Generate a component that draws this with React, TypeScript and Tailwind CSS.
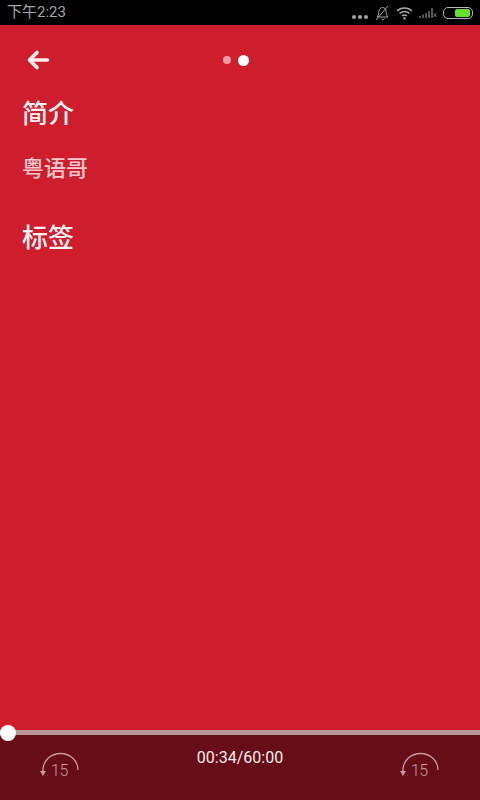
const cjk = "font-['Roboto','Noto_Sans_CJK_SC',sans-serif]";

function Replay() {
  return (
    <div className="relative h-[30px] w-[40px]">
      <svg width="40" height="30" viewBox="0 0 40 30" fill="none" className="text-[#c79a9f]">
        <path d="M3 18 A17.5 16.5 0 0 1 38 18" stroke="currentColor" strokeWidth="1.3" />
        <path d="M3 18 V20" stroke="currentColor" strokeWidth="1.6" />
        <path d="M0 19 H6 L3 24 Z" fill="currentColor" />
      </svg>
      <span className="absolute left-[11px] top-[9px] text-[16px] leading-[20px] font-light tracking-[-0.5px] text-[#c79a9f] font-['Roboto',sans-serif]">15</span>
    </div>
  );
}

function StatusBar() {
  return (
    <div className="flex h-[25px] items-center justify-between bg-black pl-[7px] pr-[7px]">
      <span className={`text-[15px] text-[#a5a5a5] ${cjk}`}>下午2:23</span>
      <div className="flex items-center gap-[6px] text-[#a5a5a5]">
        <div className="mt-[8px] flex gap-[2px]">
          <div className="h-[4px] w-[4px] rounded-full bg-[#a5a5a5]" />
          <div className="h-[4px] w-[4px] rounded-full bg-[#a5a5a5]" />
          <div className="h-[4px] w-[4px] rounded-full bg-[#a5a5a5]" />
        </div>
        <svg width="16" height="16" viewBox="0 0 16 16" fill="none" stroke="currentColor" strokeWidth="1">
          <path d="M3 12 C5 10 4.5 8 5 6 C5.5 3.5 7 2.5 8.5 2.5 C10.5 2.5 12 4 12 6 C12 8 12.5 10 14 12 Z" />
          <path d="M7 13.5 C8 15 9.5 15 10.5 13.5" />
          <path d="M14 1 L2 15" />
        </svg>
        <svg width="17" height="14" viewBox="0 0 17 14" fill="none" stroke="currentColor" strokeWidth="1.5">
          <path d="M1 5 C5 1 12 1 16 5" />
          <path d="M3.5 7.5 C6.5 5 10.5 5 13.5 7.5" />
          <path d="M6 10 C7.5 8.8 9.5 8.8 11 10" />
          <circle cx="8.5" cy="12.2" r="1.2" fill="currentColor" stroke="none" />
        </svg>
        <svg width="18" height="14" viewBox="0 0 18 14" fill="#555">
          <rect x="0" y="10" width="2" height="2" />
          <rect x="3" y="8.5" width="2" height="3.5" />
          <rect x="6" y="7" width="2" height="5" />
          <rect x="9" y="5" width="2" height="7" />
          <rect x="12" y="2" width="2" height="10" />
          <path d="M14.5 7.5 L17.5 11 M17.5 7.5 L14.5 11" stroke="#777" strokeWidth="1" />
        </svg>
        <div className="flex h-[12px] w-[30px] items-center justify-end rounded-[5px] border border-[#b5b5b5] pr-[2px]">
          <div className="h-[8px] w-[15px] rounded-[2px] bg-[#66e02e]" />
        </div>
      </div>
    </div>
  );
}

export default function App() {
  return (
    <div className="flex h-[800px] w-[480px] flex-col overflow-hidden bg-[#ce1d2d]">
      <StatusBar />
      <div className="relative flex h-[70px] shrink-0 items-center justify-center pr-[8px]">
        <svg className="absolute left-[26px] top-[24px]" width="24" height="22" viewBox="0 0 24 22" fill="none" stroke="#fbeef0" strokeWidth="3.6" strokeLinecap="round" strokeLinejoin="round">
          <path d="M21.5 11 H4" />
          <path d="M11 3.5 L3.5 11 L11 18.5" />
        </svg>
        <div className="flex items-center gap-[7px]">
          <div className="h-[8px] w-[8px] rounded-full bg-[#f29aa2]" />
          <div className="h-[11px] w-[11px] rounded-full bg-white" />
        </div>
      </div>
      <div className={`flex flex-1 flex-col pl-[22px] ${cjk}`}>
        <h2 className="mt-[1px] text-[26px] font-medium leading-[36px] text-[#fdf2f3]">简介</h2>
        <p className="mt-[22px] text-[22px] font-medium leading-[30px] text-[#f6c9cd]">粤语哥</p>
        <h2 className="mt-[36px] text-[26px] font-medium leading-[36px] text-[#fdf2f3]">标签</h2>
      </div>
      <div className="relative h-[70px] shrink-0 bg-[#660d18]">
        <div className="absolute left-0 right-0 top-0 h-[5px] bg-[#b89496]" />
        <div className="absolute left-0 top-[-5px] h-[16px] w-[16px] rounded-full bg-white" />
        <div className="flex h-full items-start justify-between px-[40px] pt-[22px]">
          <Replay />
          <span className={`mt-[-5px] text-[16px] leading-[22px] text-[#f8eced] ${cjk}`}>00:34/60:00</span>
          <Replay />
        </div>
      </div>
    </div>
  );
}
